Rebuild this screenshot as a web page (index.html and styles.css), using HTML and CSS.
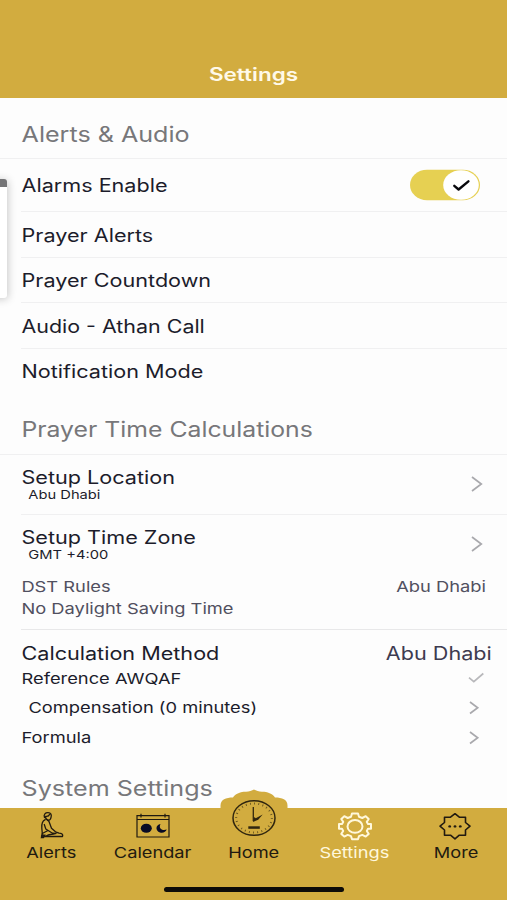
FILE: index.html
```html
<!DOCTYPE html>
<html lang="en">
<head>
<meta charset="utf-8">
<title>Settings</title>
<link rel="stylesheet" href="styles.css">
</head>
<body>
<div class="screen">
  <header class="header"><h1 class="title">Settings</h1></header>
  <main class="content">
    <h2 class="heading heading-alerts"><span class="t">Alerts &amp; Audio</span></h2>
    <div class="row row-toggle"><span class="t">Alarms Enable</span>
      <svg class="toggle" width="72" height="32" viewBox="0 0 72 32">
        <rect x="1" y="0.7" width="70" height="30.6" rx="17" ry="15.3" fill="#e6d052"/>
        <ellipse cx="52" cy="16" rx="17.8" ry="14.8" fill="#fff"/>
        <path d="M45.3 16.8l4.3 3.7 9.8-8.2" fill="none" stroke="#08080c" stroke-width="2.4" stroke-linecap="round" stroke-linejoin="round"/>
      </svg>
    </div>
    <div class="row"><span class="t">Prayer Alerts</span></div>
    <div class="row"><span class="t">Prayer Countdown</span></div>
    <div class="row row-audio"><span class="t">Audio - Athan Call</span></div>
    <div class="row row-last"><span class="t">Notification Mode</span></div>

    <h2 class="heading heading-times"><span class="t">Prayer Time Calculations</span></h2>
    <div class="row row-detail">
      <div class="stack"><span class="t">Setup Location</span><span class="t sub">Abu Dhabi</span></div>
      <svg class="chevron" width="12" height="18" viewBox="0 0 12 18"><path d="M1 2l9.300 7L1 16"/></svg>
    </div>
    <div class="row row-zone">
      <div class="stack"><span class="t">Setup Time Zone</span><span class="t sub">GMT +4:00</span></div>
      <svg class="chevron" width="12" height="18" viewBox="0 0 12 18"><path d="M1 2l9.300 7L1 16"/></svg>
    </div>
    <div class="dst">
      <div class="line"><span class="t">DST Rules</span><span class="t end">Abu Dhabi</span></div>
      <div class="line"><span class="t">No Daylight Saving Time</span></div>
    </div>
    <section class="method">
      <div class="line method-name"><span class="t">Calculation Method</span><span class="t end">Abu Dhabi</span></div>
      <div class="line option first"><span class="t">Reference AWQAF</span>
        <svg class="tick" width="18" height="14" viewBox="0 0 18 14"><path d="M2 6.700l4.800 4L16.300 2.500"/></svg></div>
      <div class="line option indent"><span class="t">Compensation (0 minutes)</span>
        <svg class="chevron small" width="12" height="16" viewBox="0 0 12 16"><path d="M2 2l7.700 5.700L2 13.500"/></svg></div>
      <div class="line option"><span class="t">Formula</span>
        <svg class="chevron small" width="12" height="16" viewBox="0 0 12 16"><path d="M2 2l7.700 5.700L2 13.500"/></svg></div>
    </section>
    <h2 class="heading heading-system"><span class="t">System Settings</span></h2>
  </main>

  <nav class="tabbar">
    <svg class="arch" width="68" height="20" viewBox="0 0 68 20"><path d="M0.500 20V16.500C0.500 10.500 6 8.500 13 8.500C15 4.500 22 2.500 26 2.700C29 2.500 32 1.500 34 0.500C36 1.500 39 2.500 42 2.700C46 2.500 53 4.500 55 8.500C62 8.500 67.500 10.500 67.500 16.500V20z" fill="#d2ac3f"/></svg>
    <a class="tab"><svg class="icon" width="36" height="32" viewBox="0 0 36 32"><g fill="none" stroke="#211a10" stroke-width="1.300" stroke-linejoin="round" stroke-linecap="round"><path d="M10.500 6.500C9.300 3.300 11.500 1.500 14 1.600C17 1.700 17.800 4 17 6.500C16.500 8.700 15.500 9.500 13.500 9C12 8.600 11.500 7.500 11.500 5.300C13.500 5.600 15 5 15.500 3.500"/><path d="M11.200 8.700C8.500 10 7.500 13 7.800 17L8.300 22.500L7.500 25.500H28.500C29.500 23.300 27.500 22.200 25 22.200L21.500 20.800L17.500 17.300L15 10.500L13.500 9"/><path d="M10.300 13.500L11.800 18L18.500 22.200L22 22.500M8.300 22.500L13.500 19.700M12 25.200C14.500 23 18 23.500 20.500 22.800"/></g><path d="M6.500 27.300l1.500-4 4 .5-2.200 3.500z" fill="#211a10"/></svg><span class="t">Alerts</span></a>
    <a class="tab"><svg class="icon" width="36" height="32" viewBox="0 0 36 32"><path d="M2 4.700H34V26H2zM2 8.500H34M6 2.800V6.500M30 2.800V6.500" fill="none" stroke="#211a10" stroke-width="1.200"/><ellipse cx="11.300" cy="17.300" rx="5.500" ry="4.500" fill="#090b25"/><path d="M25.500 13C20.500 13.800 20 19.800 25 21.600C28 22.500 31 21 31.700 18.600C27 20.300 23.300 17.300 25.500 13z" fill="#090b25"/></svg><span class="t">Calendar</span></a>
    <a class="tab"><svg class="clock" width="46" height="38" viewBox="0 0 46 38"><g fill="none" stroke="#30260f"><ellipse cx="23" cy="19" rx="21" ry="17.300" stroke-width="1.500"/><ellipse cx="23" cy="19" rx="17.800" ry="14.500" stroke-width="2" stroke-dasharray="0.900 3.320" opacity=".65"/><path d="M22.300 8V22" stroke-width="1.300"/></g><path d="M21.800 23l1.600-5 1.300 1.200 7-3.700-4.500 5.300z" fill="#30260f"/><path d="M17.300 27.300h11.500v2.500H17.300z" fill="#30260f"/></svg><span class="t">Home</span></a>
    <a class="tab active"><svg class="icon" width="36" height="32" viewBox="0 0 36 32"><g fill="none" stroke="#fff8dc" stroke-width="2" stroke-linejoin="round"><path d="M15 2.500H21L22 5.800L25.300 7L28.700 5.200L31.700 8L29.800 10.900L31 13H34V17.800H31L29.800 20L31.700 22.900L28.700 25.600L25.300 23.900L22 25.100L21 28.300H15L14 25.100L10.700 23.900L7.300 25.600L4.300 22.900L6.200 20L5 17.800H2V13H5L6.200 10.900L4.300 8L7.300 5.200L10.700 7L14 5.800z"/><ellipse cx="18" cy="15.400" rx="7.500" ry="6.400"/></g></svg><span class="t">Settings</span></a>
    <a class="tab"><svg class="icon" width="36" height="32" viewBox="0 0 36 32"><path d="M17 2.700L21.300 6.200H27.500V11.500L32 15.200L27.500 19V24.200H21.300L17 27.800L12.500 24.200H6.500V19L2 15.200L6.500 11.500V6.200H12.500z" fill="none" stroke="#211a10" stroke-width="1.600" stroke-linejoin="round"/><g fill="#211a10"><ellipse cx="11.700" cy="15.400" rx="1.400" ry="1.200"/><ellipse cx="17" cy="15.400" rx="1.400" ry="1.200"/><ellipse cx="22.300" cy="15.400" rx="1.400" ry="1.200"/></g></svg><span class="t">More</span></a>
    <div class="home-indicator"></div>
  </nav>
  <aside class="edge-panel"></aside>
</div>
</body>
</html>
```
FILE: styles.css
```css
* { box-sizing: border-box; }
body { margin: 0; font-family: Inter, "Liberation Sans", sans-serif; color: #1c1c2b; background: #fdfdfd; }
.screen { position: relative; display: flex; flex-direction: column; width: 507px; height: 900px; overflow: hidden; }

/* Wide lettering: every label is stretched horizontally */
.t { display: inline-block; white-space: nowrap; transform: translate(0.5px, 0.4px) scaleX(1.2); transform-origin: left center; }
.t.end { transform-origin: right center; margin-left: auto; }

.header { height: 98px; padding-top: 51px; background: #d2ac3f; flex: none; text-align: center; }
.title { margin: 0; font-size: 18px; line-height: 47px; font-weight: 600; color: #fff9e8; transform: scaleX(1.25); }

.content { flex: none; height: 710px; overflow: hidden; }
.heading { margin: 0; padding-left: 21px; font-size: 21px; font-weight: 400; color: #77777a; border-bottom: 1px solid #f0f0f1; }
.heading .t { transform: translate(0.6px, 0.4px) scaleX(1.195); }
.heading-alerts { height: 61px; padding-top: 13px; line-height: 47px; }
.heading-times { height: 60px; padding-top: 9px; line-height: 51px; }
.heading-times .t { transform: translate(0.4px, 0.4px) scaleX(1.18); }
.heading-system { padding-top: 21px; line-height: 30px; border: 0; }

.row { display: flex; align-items: center; height: 45.5px; margin-left: 21px; padding: 2px 24px 0 0; font-size: 18px; border-bottom: 1px solid #f0f0f1; }
.row-toggle { height: 53px; padding: 0 26px 0 0; }
.row-audio .t { transform: translate(0.5px, 0.4px) scaleX(1.19); }
.row-last { border-bottom: 0; height: 46px; padding-top: 0; }
.toggle { margin-left: auto; }
.row-detail { height: 60px; padding-top: 0; }
.row-zone { height: 48px; border-bottom: 0; align-items: flex-start; padding-top: 11px; }
.row-zone .chevron { margin-top: 9px; }
.stack { display: flex; flex-direction: column; align-items: flex-start; line-height: 22px; }
.stack .t { transform: translate(0.5px, 0.6px) scaleX(1.2); }
.stack .sub { font-size: 12px; line-height: 14px; margin-left: 7px; transform: translate(0.3px, 0.4px) scaleX(1.225); }
.chevron, .tick { margin-left: auto; fill: none; stroke: #a9a9ad; stroke-width: 1.700; }
.tick { stroke: #b8b8bb; }

.line { display: flex; align-items: center; }
.dst { height: 67px; margin-left: 21px; padding: 13px 21px 0 0; font-size: 15px; line-height: 22px; color: #515060; border-bottom: 1px solid #e8e8e9; }
.dst .t { transform: translate(0.4px, 0.4px) scaleX(1.22); }
.method { margin-left: 21px; padding-top: 11px; }
.method-name { font-size: 18px; line-height: 24px; padding-right: 15px; }
.method-name .t { transform: translate(0.5px, 0.6px) scaleX(1.2); }
.method-name .end { color: #3e3b50; transform: translate(-0.5px, 0.6px) scaleX(1.2); }
.option { height: 30px; font-size: 15px; padding-right: 27px; }
.option.first { height: 27px; padding-right: 22px; }
.option .t { transform: translate(0.5px, 0.4px) scaleX(1.22); }
.option.indent { height: 31px; padding-top: 1px; padding-left: 7px; }

.tabbar { position: relative; display: flex; height: 92px; padding: 0 0 0 1px; flex: none; background: #d2ac3f; color: #211a10; }
.arch { position: absolute; left: 220px; top: -19px; }
.tab { position: relative; flex: 1; display: flex; flex-direction: column; align-items: center; padding-top: 3px; font-size: 15px; line-height: 20px; }
.tab .t { transform: translate(-0.3px, 0.4px) scaleX(1.215); transform-origin: center; }
.clock { margin-top: -12px; margin-bottom: 6px; }
.active { color: #fff8dc; }
.home-indicator { position: absolute; left: 164px; bottom: 8px; width: 180px; height: 5px; border-radius: 3px; background: #0d0b08; }

.edge-panel { position: absolute; left: -10px; top: 179px; width: 17px; height: 119px; border-top: 8px solid #747476; border-radius: 3px; background: #fff; box-shadow: 1px 1px 8px rgba(0, 0, 0, .22); }
```
